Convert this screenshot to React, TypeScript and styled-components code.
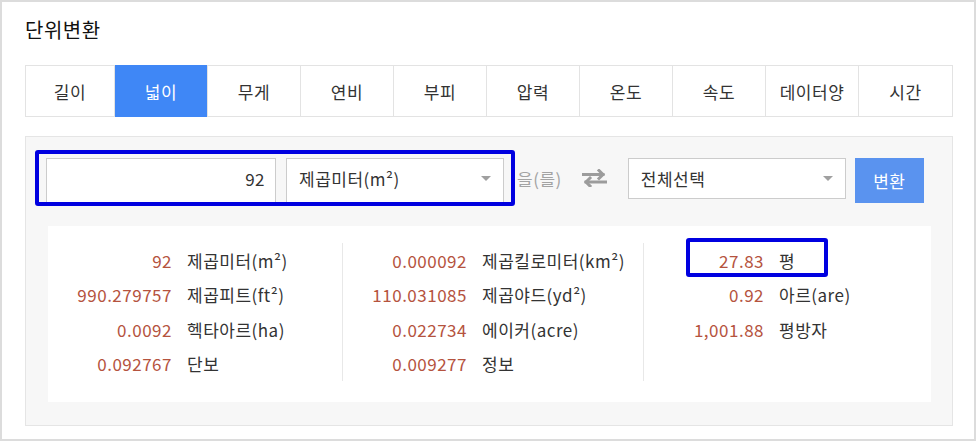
import React from "react";
import styled, { createGlobalStyle } from "styled-components";

const GlobalStyle = createGlobalStyle`
  html, body {
    margin: 0;
    padding: 0;
    background: #fff;
  }
  body {
    font-family: "Noto Sans CJK KR", "Noto Sans", sans-serif;
    color: #333;
    letter-spacing: 0.5px;
  }
  * {
    box-sizing: border-box;
  }
`;

const Frame = styled.div`
  width: 976px;
  height: 441px;
  border: 2px solid #dcdcdc;
  padding: 0 21px 0 23px;
  overflow: hidden;
`;

const Title = styled.h2`
  margin: 16px 0 23px;
  font-size: 20px;
  line-height: 24px;
  font-weight: 400;
  color: #111;
`;

const TabList = styled.ul`
  display: grid;
  grid-template-columns: 89px repeat(9, 1fr);
  height: 52px;
  margin: 0;
  padding: 0;
  list-style: none;
  border: 1px solid #e3e3e3;
`;

const Tab = styled.li<{ $active?: boolean }>`
  display: flex;
  align-items: center;
  justify-content: center;
  font-size: 17px;
  color: ${(p) => (p.$active ? "#fff" : "#333")};
  background: ${(p) => (p.$active ? "#3f87f6" : "#fff")};
  border-right: 1px solid #e3e3e3;
  margin: ${(p) => (p.$active ? "-1px 0" : "0")};
  &:last-child {
    border-right: none;
  }
`;

const Panel = styled.section`
  margin-top: 19px;
  height: 290px;
  background: #f7f7f7;
  border: 1px solid #e5e5e5;
  padding: 13px 21px 22px 9px;
`;

const FormRow = styled.div`
  display: flex;
  align-items: center;
  height: 56px;
`;

const Highlight = styled.div`
  display: flex;
  gap: 10px;
  height: 56px;
  padding: 4px 7px 0;
  border: 4px solid #0000e0;
  border-radius: 3px;
  overflow: hidden;
  background: #f7f7f7;
`;

const NumberInput = styled.div`
  width: 230px;
  height: 46px;
  border: 1px solid #ccc;
  background: #fff;
  padding: 0 10px;
  font-size: 17px;
  line-height: 40px;
  text-align: right;
`;

const Select = styled.div<{ $tall?: boolean }>`
  position: relative;
  width: 218px;
  height: ${(p) => (p.$tall ? 46 : 41)}px;
  border: 1px solid #ccc;
  background: #fff;
  padding: 0 12px;
  font-size: 17px;
  line-height: 39px;
  color: #333;
  &::after {
    content: "";
    position: absolute;
    right: 12px;
    top: 17px;
    border-left: 5px solid transparent;
    border-right: 5px solid transparent;
    border-top: 5px solid #a0a0a0;
  }
`;

const Particle = styled.span`
  margin-left: 2px;
  font-size: 17px;
  color: #a3a3a3;
`;

const SwapIcon = styled.svg`
  margin: 0 21px 0 20px;
  flex: none;
`;

const ConvertButton = styled.button`
  margin-left: 9px;
  margin-top: 4px;
  width: 69px;
  height: 45px;
  border: none;
  background: #5a93ef;
  color: #fff;
  font-family: inherit;
  font-size: 17px;
  letter-spacing: 0.5px;
  padding: 0;
`;

const Results = styled.div`
  display: grid;
  grid-template-columns: 294px 301px 1fr;
  margin: 20px 0 0 13px;
  padding: 17px 0 21px;
  background: #fff;
`;

const Column = styled.div`
  border-left: 1px solid #e8e8e8;
  &:first-child {
    border-left: none;
  }
`;

const Row = styled.div`
  position: relative;
  display: flex;
  align-items: center;
  height: 34.5px;
  gap: 15px;
  font-size: 17px;
`;

const Value = styled.span<{ $width: number }>`
  width: ${(p) => p.$width}px;
  text-align: right;
  color: #b5533e;
`;

const Label = styled.span`
  color: #333;
`;

const RowMark = styled.span`
  position: absolute;
  left: 42px;
  top: -5px;
  width: 142px;
  height: 39px;
  border: 4px solid #0000e0;
  border-radius: 3px;
`;

const tabs = ["길이", "넓이", "무게", "연비", "부피", "압력", "온도", "속도", "데이터양", "시간"];

type Item = { value: string; label: string; marked?: boolean };

const columns: { width: number; items: Item[] }[] = [
  {
    width: 124,
    items: [
      { value: "92", label: "제곱미터(m²)" },
      { value: "990.279757", label: "제곱피트(ft²)" },
      { value: "0.0092", label: "헥타아르(ha)" },
      { value: "0.092767", label: "단보" },
    ],
  },
  {
    width: 124,
    items: [
      { value: "0.000092", label: "제곱킬로미터(km²)" },
      { value: "110.031085", label: "제곱야드(yd²)" },
      { value: "0.022734", label: "에이커(acre)" },
      { value: "0.009277", label: "정보" },
    ],
  },
  {
    width: 120,
    items: [
      { value: "27.83", label: "평", marked: true },
      { value: "0.92", label: "아르(are)" },
      { value: "1,001.88", label: "평방자" },
    ],
  },
];

export default function App() {
  return (
    <>
      <GlobalStyle />
      <Frame>
        <Title>단위변환</Title>
        <TabList>
          {tabs.map((t) => (
            <Tab key={t} $active={t === "넓이"}>
              {t}
            </Tab>
          ))}
        </TabList>
        <Panel>
          <FormRow>
            <Highlight>
              <NumberInput>92</NumberInput>
              <Select $tall>제곱미터(m²)</Select>
            </Highlight>
            <Particle>을(를)</Particle>
            <SwapIcon width="25" height="18" viewBox="0 0 25 18">
              <g stroke="#9c9c9c" strokeWidth="3" fill="none" strokeLinecap="square">
                <path d="M1 5.5h20" />
                <path d="M17 1.5l4 4-4 4" />
                <path d="M24 13h-20" />
                <path d="M8 9l-4 4 4 4" />
              </g>
            </SwapIcon>
            <Select>전체선택</Select>
            <ConvertButton>변환</ConvertButton>
          </FormRow>
          <Results>
            {columns.map((col, i) => (
              <Column key={i}>
                {col.items.map((it) => (
                  <Row key={it.label}>
                    <Value $width={col.width}>{it.value}</Value>
                    <Label>{it.label}</Label>
                    {it.marked && <RowMark />}
                  </Row>
                ))}
              </Column>
            ))}
          </Results>
        </Panel>
      </Frame>
    </>
  );
}
